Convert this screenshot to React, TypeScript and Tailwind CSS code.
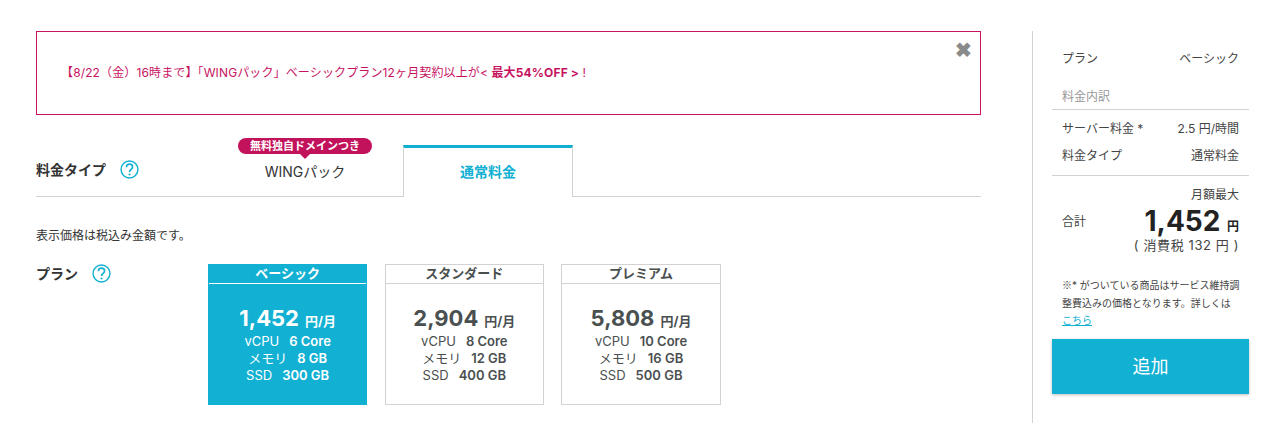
const FONT = 'font-["Inter","Noto_Sans_CJK_JP",sans-serif]';

const plans = [
  { name: 'ベーシック', price: '1,452', cpu: '6 Core', mem: '8 GB', ssd: '300 GB', active: true },
  { name: 'スタンダード', price: '2,904', cpu: '8 Core', mem: '12 GB', ssd: '400 GB', active: false },
  { name: 'プレミアム', price: '5,808', cpu: '10 Core', mem: '16 GB', ssd: '500 GB', active: false },
];

function Help() {
  return (
    <svg viewBox="0 0 20 20" className="w-[19px] h-[19px] shrink-0 text-[#12b0d3]" fill="none" stroke="currentColor">
      <circle cx="10" cy="10" r="8.9" strokeWidth="1.5" />
      <path d="M6.8 7.6c0-2 1.4-3.2 3.2-3.2s3.2 1.2 3.2 3c0 1.5-.9 2.2-1.9 2.9-.9.6-1.3 1.2-1.3 2.4" strokeWidth="1.7" />
      <circle cx="10" cy="15.3" r="1.1" fill="currentColor" stroke="none" />
    </svg>
  );
}

function PlanCard({ plan }: { plan: (typeof plans)[number] }) {
  const outer = plan.active
    ? 'bg-[#12b0d3] border-[#12b0d3] text-white'
    : 'bg-white border-[#d2d2d2] text-[#4a4f50]';
  return (
    <div className={`w-[159.3px] h-[141px] border flex flex-col ${outer}`}>
      <div
        className={`h-[19px] pb-[1px] flex items-center justify-center text-[13px] font-bold leading-none border-b ${
          plan.active ? 'border-white' : 'border-[#d2d2d2]'
        }`}
      >
        {plan.name}
      </div>
      <div className="flex flex-col items-center pt-[20px]">
        <div className="flex items-baseline h-[29px] leading-[29px]">
          <span className="text-[22px] font-bold">{plan.price}</span>
          <span className="text-[13px] font-bold ml-[6px]">円/月</span>
        </div>
        <div className="text-[13px] leading-[17px] text-center">
          <div>vCPU<b className="ml-[10px] font-semibold">{plan.cpu}</b></div>
          <div>メモリ<b className="ml-[10px] font-semibold">{plan.mem}</b></div>
          <div>SSD<b className="ml-[10px] font-semibold">{plan.ssd}</b></div>
        </div>
      </div>
    </div>
  );
}

export default function App() {
  return (
    <div className={`w-[1274px] h-[426px] bg-white flex pt-[31px] pl-[36px] text-[#333] ${FONT}`}>
      <div className="w-[945px] shrink-0">
        <div className="relative h-[84px] border border-[#c7135f] flex items-center pl-[24px] text-[12px] tracking-[0.13px] text-[#c7135f]">
          <span>
            【8/22（金）16時まで】「WINGパック」ベーシックプラン12ヶ月契約以上が&lt; <b className="font-bold">最大54%OFF &gt;</b> !
          </span>
          <span className="absolute top-[6px] right-[8px] text-[#8a8a8a] text-[20px] leading-[24px] font-bold">✖</span>
        </div>

        <div className="flex h-[52px] mt-[30px] border-b border-[#d2d2d2]">
          <div className="w-[190px] flex items-center gap-[14px] pb-[2px] text-[14px] font-bold">
            料金タイプ <Help />
          </div>
          <div className="relative w-[158px] mr-[19px] flex items-center justify-center text-[14px] text-[#333]">
            <span className="pt-[1px]">WINGパック</span>
            <span className="absolute left-[12px] -top-[7px] w-[134px] h-[16px] rounded-full bg-[#c2125c] text-white text-[11px] font-bold flex items-center justify-center">
              無料独自ドメインつき
            </span>
            <span className="absolute left-[74px] top-[9px] w-0 h-0 border-x-[5px] border-x-transparent border-t-[5px] border-t-[#c2125c]" />
          </div>
          <div className="w-[170px] h-[52px] pb-[2px] bg-white border-x border-[#d2d2d2] border-t-[3px] border-t-[#12b0d3] flex items-center justify-center text-[14px] font-bold text-[#12b0d3]">
            通常料金
          </div>
        </div>

        <p className="text-[12px] leading-[16px] mt-[31px] text-[#333]">表示価格は税込み金額です。</p>

        <div className="flex mt-[20px]">
          <div className="w-[172px] flex items-start gap-[14px] text-[14px] font-bold">
            <span className="leading-[19px]">プラン</span>
            <Help />
          </div>
          <div className="flex gap-[17.4px]">
            {plans.map((plan) => (
              <PlanCard key={plan.name} plan={plan} />
            ))}
          </div>
        </div>
      </div>

      <div className="ml-[51px] w-[217px] h-[392px] border-l border-[#d2d2d2] pl-[19px] text-[12px] text-[#444]">
        <div className="flex justify-between px-[10px] pt-[19px] leading-[18px]">
          <span>プラン</span>
          <span>ベーシック</span>
        </div>
        <div className="px-[10px] pt-[20px] pb-[3px] leading-[18px] text-[#999] border-b border-[#d2d2d2]">料金内訳</div>
        <div className="flex justify-between px-[10px] pt-[10px] leading-[18px]">
          <span>サーバー料金 *</span>
          <span>2.5 円/時間</span>
        </div>
        <div className="flex justify-between px-[10px] pt-[9px] pb-[10px] leading-[18px] border-b border-[#d2d2d2]">
          <span>料金タイプ</span>
          <span>通常料金</span>
        </div>
        <div className="px-[10px] pt-[10px] text-right leading-[18px]">月額最大</div>
        <div className="flex justify-between items-center px-[10px] h-[32px] mt-[2px]">
          <span>合計</span>
          <span className="text-[#222] font-bold text-[28px] leading-[32px] pt-[3px]">
            1,452 <span className="text-[12px]">円</span>
          </span>
        </div>
        <div className="px-[10px] text-right text-[13px] tracking-[0.6px] leading-[18px] -mt-[2px]">( 消費税 132 円 )</div>
        <p className="pl-[10px] text-[10px] leading-[17.5px] mt-[22px] whitespace-nowrap">
          <span className='font-["Noto_Sans_CJK_JP",sans-serif]'>※</span>* がついている商品はサービス維持調
          <br />
          整費込みの価格となります。詳しくは
          <br />
          <a className="text-[#12b0d3] underline">こちら</a>
        </p>
        <button className="w-[197px] h-[55px] mt-[9px] bg-[#12b0d3] text-white text-[18px] shadow-[0_1px_3px_rgba(0,0,0,0.25)]">
          追加
        </button>
      </div>
    </div>
  );
}
